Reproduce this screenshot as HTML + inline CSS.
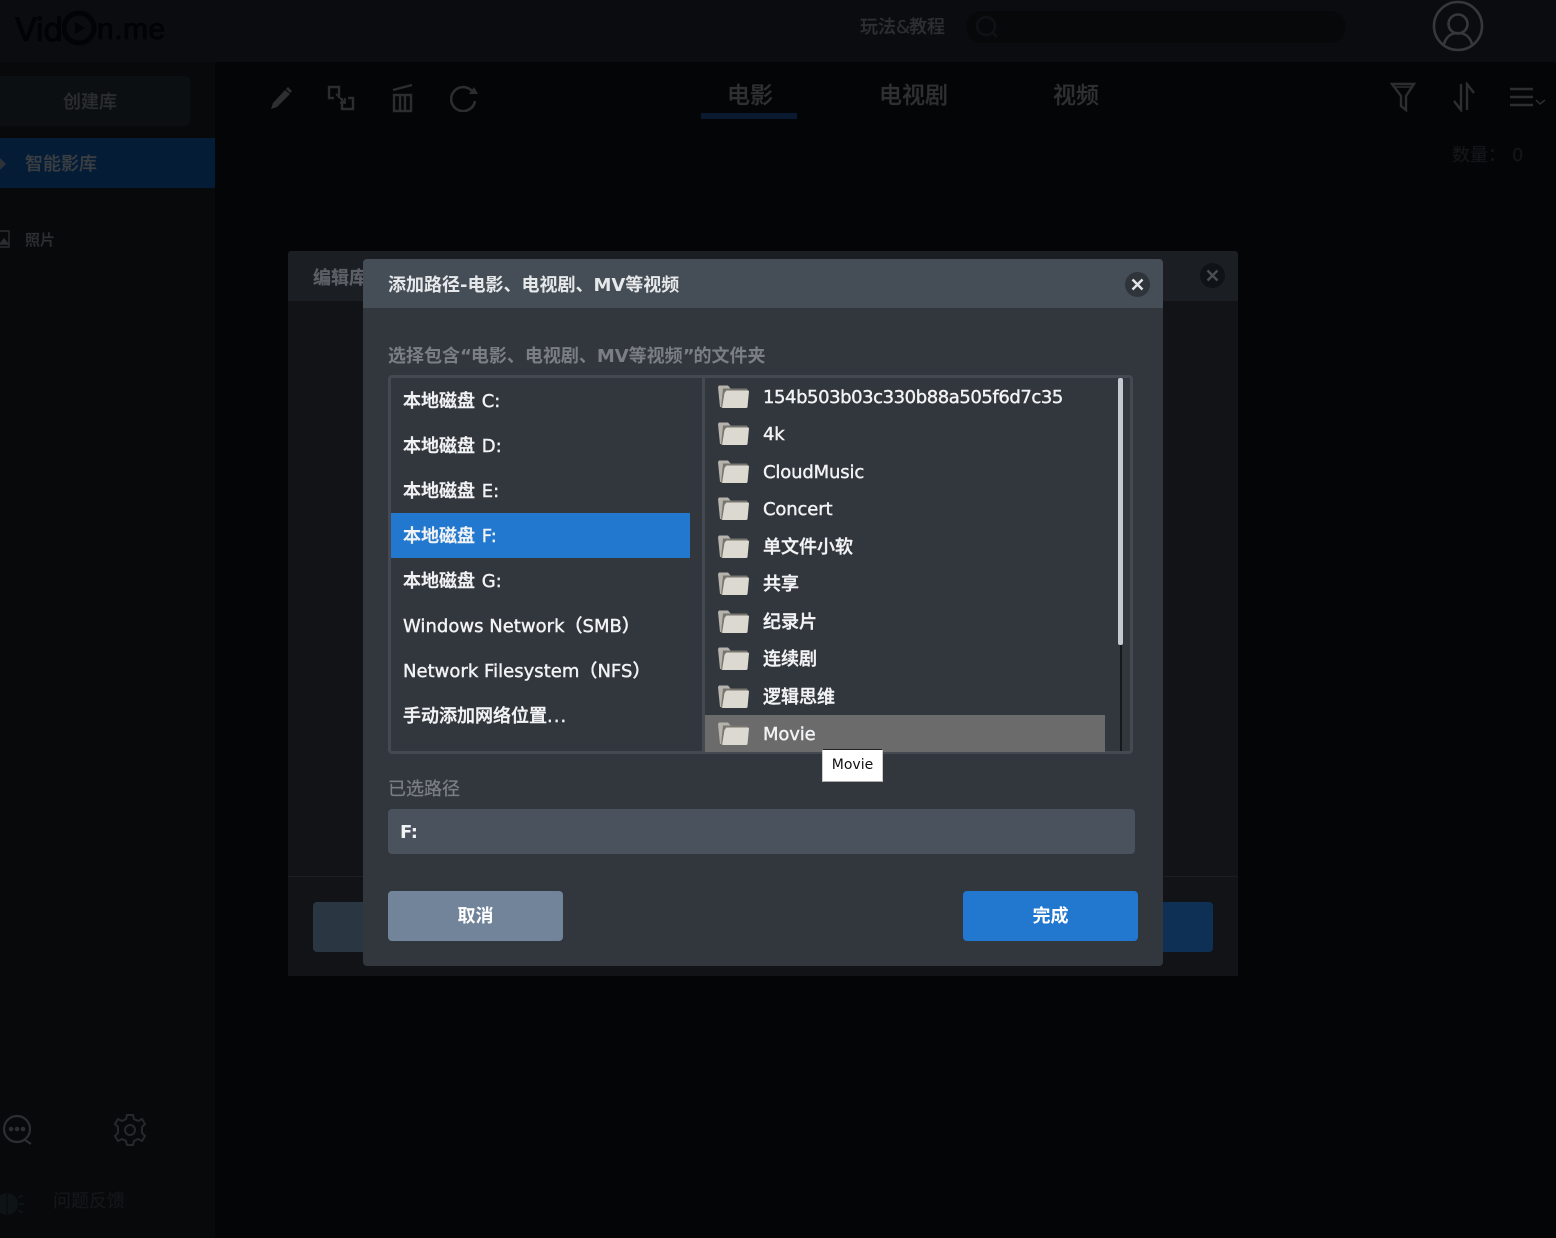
<!DOCTYPE html>
<html lang="zh"><head><meta charset="utf-8"><title>Vidon.me</title>
<style>
html,body{margin:0;padding:0;background:#040506}
#p{position:relative;width:1556px;height:1238px;overflow:hidden;background:#040506;font-family:"DejaVu Sans","Noto Sans CJK SC",sans-serif;font-size:18px}
#p div,#p svg{position:absolute}
.t{white-space:nowrap;line-height:32px;-webkit-text-stroke:.25px currentColor}
.d{line-height:30px}
.w{color:#f2f3f4;font-weight:500;-webkit-text-stroke:.4px currentColor}
.l{font-size:18px;letter-spacing:-.15px}
.c{font-size:18px;letter-spacing:0;margin-left:1px}
.n{font-size:18px;letter-spacing:.02px}
.q{letter-spacing:-1px}
.fi{left:717px;width:34px;height:26px}
</style></head><body>
<div id="p">
<svg width="0" height="0" style="left:0;top:0"><defs>
<symbol id="f" viewBox="0 0 34 26">
<path d="M1 2 L2 .5 H11 L14 4 H9 L6 22 H3 Z" fill="#b5b3ac"/>
<path d="M6 3.500 H30 L31 5.500 H9 L7 23 H4 Z" fill="#77766f"/>
<path d="M9 6 Q9 5.500 10 5.500 H31 Q32 5.500 32 6.500 L30.500 22 Q30.400 23 29 23 H6 Q5 23 5.200 22 L7.500 8 Z" fill="#dcd9d1"/>
</symbol></defs></svg>

<!-- top bar -->
<div style="left:0;top:0;width:1556px;height:62px;background:#0a0c0f"></div>
<div style="left:0;top:62px;width:215px;height:1176px;background:#07090b"></div>
<div class="t" style="left:15px;top:10px;font:400 32px/40px 'DejaVu Sans',sans-serif;color:#020304;letter-spacing:-1px;-webkit-text-stroke:1px #020304">Vid</div>
<svg style="left:62px;top:6px" width="40" height="42" viewBox="0 0 40 42" fill="none"><circle cx="17" cy="22" r="15" stroke="#020304" stroke-width="5"/><path d="M13 16l10 6-10 6z" fill="#020304"/></svg>
<div class="t" style="left:97px;top:10px;font:400 30px/40px 'Liberation Sans',sans-serif;color:#020304;letter-spacing:.5px;-webkit-text-stroke:1px #020304">n.me</div>
<div class="t" style="left:860px;top:12px;color:#2c2e31;font-weight:500">玩法<span style="letter-spacing:-1px">&amp;</span>教程</div>
<div style="left:966px;top:11px;width:380px;height:32px;border-radius:16px;background:#07080a"></div>
<svg style="left:973px;top:14px" width="28" height="28" fill="none" stroke="#0f1215" stroke-width="2.500"><circle cx="13" cy="12" r="9"/><path d="M20 19l4 4"/></svg>
<svg style="left:1432px;top:0" width="52" height="52" fill="none" stroke="#36383b" stroke-width="2.600"><circle cx="26" cy="26" r="24"/><circle cx="26" cy="24" r="9.500"/><path d="M12 44c2-7 7-11 14-11s12 4 14 11"/></svg>

<!-- sidebar -->
<div style="left:-10px;top:76px;width:200px;height:50px;border-radius:5px;background:#0c0f12"></div>
<div class="t d" style="left:63px;top:88px;color:#2a2d30;font-weight:500">创建库</div>
<div style="left:0;top:138px;width:215px;height:50px;background:#041c36"></div>
<svg style="left:0;top:158px" width="8" height="12"><path d="M0 0l6 6-6 6z" fill="#2c3238"/></svg>
<div class="t d" style="left:25px;top:150px;color:#3a3e42;font-weight:500">智能影库</div>
<svg style="left:0;top:229px" width="12" height="20" fill="none" stroke="#2b2d30" stroke-width="1.400"><path d="M-2 2H9V18H-2"/><path d="M0 15l4-5 4 5z" fill="#2b2d30"/></svg>
<div class="t" style="left:25px;top:226px;font-size:15px;line-height:28px;color:#2c2e31;font-weight:500">照片</div>
<svg style="left:1px;top:1112px" width="34" height="36" fill="none" stroke="#2c2e31" stroke-width="2.200"><circle cx="16" cy="17" r="13"/><path d="M24 28l6 4"/><circle cx="10" cy="17" r="1.200" fill="#2c2e31"/><circle cx="16" cy="17" r="1.200" fill="#2c2e31"/><circle cx="22" cy="17" r="1.200" fill="#2c2e31"/></svg>
<svg style="left:113px;top:1113px" width="34" height="34" viewBox="0 0 34 34" fill="none" stroke="#26282b" stroke-width="2"><circle cx="17" cy="17" r="5"/><path d="M14 2h6l1 4 4 2 4-2 3 5-3 3v6l3 3-3 5-4-2-4 2-1 4h-6l-1-4-4-2-4 2-3-5 3-3v-6l-3-3 3-5 4 2 4-2z"/></svg>
<svg style="left:0;top:1188px" width="24" height="30"><ellipse cx="7" cy="16" rx="11" ry="11" fill="#0e1315"/><path d="M18 10l5-3M19 16h5M18 22l5 3" stroke="#0e1315" stroke-width="2"/><path d="M7 5v23" stroke="#07090b"/></svg>
<div class="t d" style="left:53px;top:1187px;color:#141618">问题反馈</div>

<!-- toolbar -->
<svg style="left:268px;top:85px" width="26" height="26"><path d="M3 24l2-6L17 5l5 4L9 22z" fill="#2d2f31"/><path d="M18 4l2-2 4 4-2 2z" fill="#2d2f31"/></svg>
<svg style="left:327px;top:85px" width="28" height="26" fill="none" stroke="#2b2d2f" stroke-width="2.400"><path d="M12 13V2H2v11h5"/><path d="M15 13v11h11V13h-5"/><path d="M9 9l9 9M18 13v5h-5" stroke-width="1.800"/></svg>
<svg style="left:391px;top:83px" width="24" height="30" fill="none" stroke="#2b2d2f" stroke-width="2.400"><path d="M2 7L21 2"/><path d="M3 12h17v16H3zM9 13v14M14 13v14"/></svg>
<svg style="left:450px;top:84px" width="30" height="28" fill="none" stroke="#2b2d2f" stroke-width="2.600"><path d="M22 7A12 12 0 1 0 25 17"/><path d="M19 10h9l-4-7z" fill="#2b2d2f" stroke="none"/></svg>
<div class="t" style="left:727px;top:79px;font-size:23px;line-height:34px;color:#2e3032;font-weight:500">电影</div>
<div style="left:701px;top:113px;width:96px;height:6px;background:#0a1a30"></div>
<div class="t" style="left:879px;top:79px;font-size:23px;line-height:34px;color:#2e3032;font-weight:500">电视剧</div>
<div class="t" style="left:1053px;top:79px;font-size:23px;line-height:34px;color:#2e3032;font-weight:500">视频</div>
<svg style="left:1390px;top:82px" width="26" height="30" fill="none" stroke="#2c2e30" stroke-width="2.400"><path d="M2 2h22l-8 12v14l-5-4V14z"/><path d="M5 5h16" stroke-width="1.500"/></svg>
<svg style="left:1451px;top:82px" width="26" height="30" fill="none" stroke="#2c2e30" stroke-width="2.400"><path d="M10 2v26L3 19"/><path d="M16 28V2l7 9"/></svg>
<svg style="left:1509px;top:86px" width="40" height="22" fill="none" stroke="#2c2e30" stroke-width="2.400"><path d="M1 3h23M1 11h23M1 19h23"/><path d="M27 14l4 4 5-4" stroke-width="1.500"/></svg>
<div class="t d" style="left:1452px;top:141px;color:#141618">数量：</div>
<div class="t d" style="left:1512px;top:141px;color:#141618">0</div>

<!-- back dialog -->
<div style="left:288px;top:251px;width:950px;height:725px;background:#111316;border-radius:3px 3px 0 0"></div>
<div style="left:288px;top:251px;width:950px;height:50px;background:#1b1f24;border-radius:3px 3px 0 0"></div>
<div class="t" style="left:313px;top:263px;color:#5c6066;font-weight:700">编辑库</div>
<div style="left:1200px;top:263px;width:25px;height:25px;border-radius:50%;background:#0f1216"></div>
<svg style="left:1200px;top:263px" width="25" height="25" stroke="#4b4e52" stroke-width="2.400"><path d="M7.500 7.500l10 10M17.500 7.500l-10 10"/></svg>
<div style="left:288px;top:876px;width:950px;height:1px;background:#1c1e22"></div>
<div style="left:313px;top:902px;width:100px;height:50px;background:#2a3641;border-radius:4px"></div>
<div style="left:1100px;top:902px;width:113px;height:50px;background:#0f3055;border-radius:4px"></div>

<!-- front dialog -->
<div style="left:363px;top:259px;width:800px;height:707px;background:#32363d;border-radius:4px"></div>
<div style="left:363px;top:259px;width:800px;height:49px;background:#454d57;border-radius:4px 4px 0 0"></div>
<div class="t" style="left:388px;top:270px;color:#e6e8ea;font-weight:700;-webkit-text-stroke:0">添加路径-电影、电视剧、MV等视频</div>
<div style="left:1125px;top:272px;width:25px;height:25px;border-radius:50%;background:#2f343b"></div>
<svg style="left:1125px;top:272px" width="25" height="25" stroke="#e2e4e6" stroke-width="2.400"><path d="M7.500 7.500l10 10M17.500 7.500l-10 10"/></svg>
<div class="t" style="left:388px;top:341px;color:#7b7f85;font-weight:700;-webkit-text-stroke:0">选择包含<span class="q">“</span>电影、电视剧、MV等视频<span class="q">”</span>的文件夹</div>

<div style="left:388px;top:375px;width:739px;height:373px;border:3px solid #454a52;border-radius:4px;background:#32363d"></div>
<div style="left:702px;top:378px;width:3px;height:373px;background:#454a52"></div>
<div style="left:391px;top:513px;width:299px;height:45px;background:#2277cf"></div>
<div class="t w" style="left:403px;top:386px">本地磁盘 <span class="c">C:</span></div>
<div class="t w" style="left:403px;top:431px">本地磁盘 <span class="c">D:</span></div>
<div class="t w" style="left:403px;top:476px">本地磁盘 <span class="c">E:</span></div>
<div class="t w" style="left:403px;top:521px">本地磁盘 <span class="c">F:</span></div>
<div class="t w" style="left:403px;top:566px">本地磁盘 <span class="c">G:</span></div>
<div class="t w n" style="left:403px;top:611px">Windows Network（SMB）</div>
<div class="t w n" style="left:403px;top:656px">Network Filesystem（NFS）</div>
<div class="t w" style="left:403px;top:701px">手动添加网络位置<span style="letter-spacing:1px">...</span></div>

<div style="left:705px;top:715px;width:400px;height:37px;background:#6b6b6b"></div>
<div style="left:1120px;top:645px;width:2px;height:106px;background:#16181c"></div>
<div style="left:1118px;top:378px;width:5px;height:267px;background:#c5c8cc;border-radius:2px"></div>

<svg class="fi" style="top:385px"><use href="#f"/></svg><div class="t w l" style="left:763px;top:382px;letter-spacing:-.43px">154b503b03c330b88a505f6d7c35</div>
<svg class="fi" style="top:422px"><use href="#f"/></svg><div class="t w l" style="left:763px;top:419px">4k</div>
<svg class="fi" style="top:460px"><use href="#f"/></svg><div class="t w l" style="left:763px;top:457px">CloudMusic</div>
<svg class="fi" style="top:497px"><use href="#f"/></svg><div class="t w l" style="left:763px;top:494px">Concert</div>
<svg class="fi" style="top:535px"><use href="#f"/></svg><div class="t w" style="left:763px;top:532px">单文件小软</div>
<svg class="fi" style="top:572px"><use href="#f"/></svg><div class="t w" style="left:763px;top:569px">共享</div>
<svg class="fi" style="top:610px"><use href="#f"/></svg><div class="t w" style="left:763px;top:607px">纪录片</div>
<svg class="fi" style="top:647px"><use href="#f"/></svg><div class="t w" style="left:763px;top:644px">连续剧</div>
<svg class="fi" style="top:685px"><use href="#f"/></svg><div class="t w" style="left:763px;top:682px">逻辑思维</div>
<svg class="fi" style="top:722px"><use href="#f"/></svg><div class="t w l" style="left:763px;top:719px">Movie</div>

<div class="t" style="left:822px;top:749px;width:59px;height:31px;background:#fff;border:1px solid #ccc;border-color:#222 #ccc #aaa #ccc;text-align:center;font-size:14px;line-height:31px;color:#111;-webkit-text-stroke:0">Movie</div>

<div class="t" style="left:388px;top:774px;color:#7b7f85">已选路径</div>
<div style="left:388px;top:809px;width:747px;height:45px;background:#4a525d;border-radius:4px"></div>
<div class="t" style="left:400px;top:817px;color:#f2f3f4;font-weight:700;letter-spacing:-.5px;-webkit-text-stroke:0">F:</div>

<div class="t" style="left:388px;top:891px;width:175px;height:50px;background:#728499;border-radius:4px;text-align:center;line-height:52px;color:#fff;font-weight:700;-webkit-text-stroke:0">取消</div>
<div class="t" style="left:963px;top:891px;width:175px;height:50px;background:#2277cf;border-radius:4px;text-align:center;line-height:52px;color:#fff;font-weight:700;-webkit-text-stroke:0">完成</div>
</div>
</body></html>
